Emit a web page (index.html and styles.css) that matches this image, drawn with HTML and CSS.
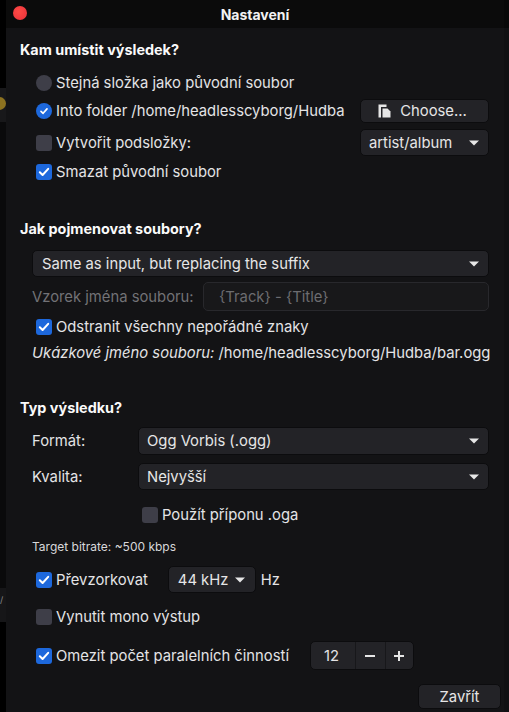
FILE: index.html
```html
<!DOCTYPE html>
<html lang="cs">
<head>
<meta charset="utf-8">
<title>Nastavení</title>
<link rel="stylesheet" href="styles.css">
</head>
<body>
<div class="screen">
  <div class="strip-left">
    <div class="sl-a"></div>
    <div class="sl-band"><span class="sl-dot"></span></div>
    <div class="sl-b"></div>
    <div class="sl-band2"><span class="sl-slash">/</span></div>
  </div>
  <div class="window">
    <div class="titlebar">
      <span class="close-dot"></span>
      <span class="title">Nastavení</span>
    </div>
    <div class="content">
      <div class="heading mt12">Kam umístit výsledek?</div>

      <div class="row h28 mt9 ind-check">
        <span class="radio"></span>
        <span class="label">Stejná složka jako původní soubor</span>
      </div>
      <div class="row h28 ind-check">
        <span class="radio on"><svg width="16" height="16" viewBox="0 0 16 16"><path d="M5 8.3 L7.1 10.3 L11 5.9" fill="none" stroke="#fff" stroke-width="1.7" stroke-linecap="round" stroke-linejoin="round"/></svg></span>
        <span class="label">Into folder /home/headlesscyborg/Hudba</span>
        <span class="spacer"></span>
        <button class="btn choose">
          <svg class="ico" width="13" height="14" viewBox="0 0 13 14"><path d="M0.5 0.5 H8.5 V3 H3 V13.5 H0.5 Z" fill="#e6e6e6"/><path d="M4.5 4.5 H9.5 L12.5 7.5 V13.5 H4.5 Z" fill="#e6e6e6"/></svg>
          <span>Choose...</span>
        </button>
      </div>
      <div class="row h27 mt4 ind-check">
        <span class="check"></span>
        <span class="label">Vytvořit podsložky:</span>
        <span class="spacer"></span>
        <div class="dropdown dd-small">
          <span>artist/album</span>
          <svg class="arrow" width="10" height="6" viewBox="0 0 10 6"><path d="M0 0.5 H10 L5 5.5 Z" fill="#e6e6e6"/></svg>
        </div>
      </div>
      <div class="row h28 mt2 ind-check">
        <span class="check on"><svg width="16" height="16" viewBox="0 0 16 16"><path d="M3.8 8.2 L6.6 11 L12.2 4.8" fill="none" stroke="#fff" stroke-width="2" stroke-linecap="round" stroke-linejoin="round"/></svg></span>
        <span class="label">Smazat původní soubor</span>
      </div>

      <div class="heading mt33">Jak pojmenovat soubory?</div>

      <div class="dropdown dd-full mt11 ind-wid">
        <span>Same as input, but replacing the suffix</span>
        <svg class="arrow" width="10" height="6" viewBox="0 0 10 6"><path d="M0 0.5 H10 L5 5.5 Z" fill="#e6e6e6"/></svg>
      </div>
      <div class="row h29 mt5 ind-wid">
        <span class="label dim">Vzorek jména souboru:</span>
        <div class="entry"><span>{Track} - {Title}</span></div>
      </div>
      <div class="row h26 mt3 ind-check">
        <span class="check on"><svg width="16" height="16" viewBox="0 0 16 16"><path d="M3.8 8.2 L6.6 11 L12.2 4.8" fill="none" stroke="#fff" stroke-width="2" stroke-linecap="round" stroke-linejoin="round"/></svg></span>
        <span class="label">Odstranit všechny nepořádné znaky</span>
      </div>
      <div class="row h20 mt3 ind-wid">
        <span class="label"><em>Ukázkové jméno souboru:</em> /home/headlesscyborg/Hudba/bar.ogg</span>
      </div>

      <div class="heading mt35">Typ výsledku?</div>

      <div class="row h28 mt9 ind-wid">
        <span class="label form-label">Formát:</span>
        <div class="dropdown dd-form">
          <span>Ogg Vorbis (.ogg)</span>
          <svg class="arrow" width="10" height="6" viewBox="0 0 10 6"><path d="M0 0.5 H10 L5 5.5 Z" fill="#e6e6e6"/></svg>
        </div>
      </div>
      <div class="row h27 mt8 ind-wid">
        <span class="label form-label">Kvalita:</span>
        <div class="dropdown dd-form">
          <span>Nejvyšší</span>
          <svg class="arrow" width="10" height="6" viewBox="0 0 10 6"><path d="M0 0.5 H10 L5 5.5 Z" fill="#e6e6e6"/></svg>
        </div>
      </div>
      <div class="row h24 mt13 ind-oga">
        <span class="check"></span>
        <span class="label">Použít příponu .oga</span>
      </div>
      <div class="row h14 mt12 ind-wid">
        <span class="small">Target bitrate: ~500 kbps</span>
      </div>
      <div class="row h27 mt13 ind-check">
        <span class="check on"><svg width="16" height="16" viewBox="0 0 16 16"><path d="M3.8 8.2 L6.6 11 L12.2 4.8" fill="none" stroke="#fff" stroke-width="2" stroke-linecap="round" stroke-linejoin="round"/></svg></span>
        <span class="label resample">Převzorkovat</span>
        <div class="dropdown dd-rate">
          <span>44 kHz</span>
          <svg class="arrow" width="10" height="6" viewBox="0 0 10 6"><path d="M0 0.5 H10 L5 5.5 Z" fill="#e6e6e6"/></svg>
        </div>
        <span class="label hz">Hz</span>
      </div>
      <div class="row h24 mt12 ind-check">
        <span class="check"></span>
        <span class="label">Vynutit mono výstup</span>
      </div>
      <div class="row h29 mt12 ind-check">
        <span class="check on"><svg width="16" height="16" viewBox="0 0 16 16"><path d="M3.8 8.2 L6.6 11 L12.2 4.8" fill="none" stroke="#fff" stroke-width="2" stroke-linecap="round" stroke-linejoin="round"/></svg></span>
        <span class="label parallel">Omezit počet paralelních činností</span>
        <div class="spin">
          <span class="spin-val">12</span>
          <span class="spin-btn"><svg width="12" height="12" viewBox="0 0 12 12"><path d="M1 6 H11" stroke="#e6e6e6" stroke-width="2"/></svg></span>
          <span class="spin-btn"><svg width="12" height="12" viewBox="0 0 12 12"><path d="M1 6 H11 M6 1 V11" stroke="#e6e6e6" stroke-width="2"/></svg></span>
        </div>
      </div>
      <div class="actions mt14">
        <button class="btn close-btn">Zavřít</button>
      </div>
    </div>
  </div>
  <div class="strip-right">
    <div class="sr-top"></div>
    <div class="sr-body"></div>
  </div>
</div>
</body>
</html>
```
FILE: styles.css
```css
* { box-sizing: border-box; }
html, body { margin: 0; padding: 0; background: #000; }
body {
  font-family: Inter, "Noto Sans", "DejaVu Sans", sans-serif;
  font-size: 14.8px;
  color: #e4e4e6;
}
.screen { display: flex; width: 509px; height: 712px; overflow: hidden; }

.strip-left { width: 6px; display: flex; flex-direction: column; background: #000; }
.sl-a { height: 88px; }
.sl-band { height: 34px; background: #18181a; position: relative; overflow: hidden; }
.sl-dot { position: absolute; left: -7px; top: 9px; width: 13px; height: 13px; border-radius: 50%; background: #8c7220; }
.sl-b { height: 466px; background: #0a0a0b; }
.sl-band2 { height: 34px; background: #161618; overflow: hidden; }
.sl-slash { display: block; margin-top: 6px; margin-left: 0; font-size: 9px; color: #8a8a8a; }

.strip-right { width: 5px; display: flex; flex-direction: column; }
.sr-top { height: 28px; background: #080808; }
.sr-body { flex: 1; background: #101012; }

.window { width: 498px; height: 712px; display: flex; flex-direction: column; background: #131315; }
.titlebar { height: 28px; flex: none; background: #0b0b0b; display: flex; align-items: center; justify-content: center; position: relative; }
.close-dot { position: absolute; left: 7px; top: 6px; width: 14px; height: 14px; border-radius: 50%; background: radial-gradient(circle at 40% 40%, #ff4a45, #e8303a); }
.title { font-weight: 700; font-size: 14px; color: #f2f2f2; }

.content { display: flex; flex-direction: column; padding: 0 15px 0 14px; }
.heading { height: 20px; line-height: 20px; font-weight: 700; font-size: 14.4px; color: #fafafa; }

.row { display: flex; align-items: center; }
.h14 { height: 14px; } .h20 { height: 20px; } .h24 { height: 24px; } .h26 { height: 26px; }
.h27 { height: 27px; } .h28 { height: 28px; } .h29 { height: 29px; }
.mt2 { margin-top: 2px; } .mt3 { margin-top: 3px; } .mt4 { margin-top: 4px; } .mt5 { margin-top: 5px; }
.mt8 { margin-top: 8px; } .mt9 { margin-top: 9px; } .mt11 { margin-top: 11px; } .mt12 { margin-top: 12px; }
.mt13 { margin-top: 13px; } .mt14 { margin-top: 14px; } .mt33 { margin-top: 33px; } .mt35 { margin-top: 35px; }

.ind-check { padding-left: 16px; }
.ind-wid { margin-left: 12px; }
.ind-oga { padding-left: 122px; }
.spacer { flex: 1; }

.label { white-space: nowrap; }
.label.dim { color: #727276; }
.label em { font-style: italic; }
.check + .label, .radio + .label { margin-left: 4px; }

.radio { width: 16px; height: 16px; border-radius: 50%; background: #3e3e48; flex: none; display: flex; }
.radio.on { background: #1d68dc; }
.check { width: 16px; height: 16px; border-radius: 3px; background: #3e3e48; flex: none; display: flex; }
.check.on { background: #1d68dc; }

.btn {
  font-family: inherit; font-size: 14.8px; color: #e6e6e6;
  background: #232327; border: 1px solid #0c0c0e; border-radius: 5px;
  display: flex; align-items: center; justify-content: center; padding: 0; margin: 0;
}
.choose { width: 129px; height: 24px; gap: 9px; padding-right: 4px; }

.dropdown {
  display: flex; align-items: center; justify-content: space-between;
  background: #232327; border: 1px solid #0c0c0e; border-radius: 5px;
  color: #e6e6e6; white-space: nowrap;
}
.dropdown .arrow { flex: none; }
.dd-small { width: 129px; height: 27px; padding: 0 9px 0 8px; }
.dd-full { height: 27px; padding: 0 9px 0 9px; }
.dd-form { width: 351px; height: 100%; margin-left: auto; padding: 0 9px 0 8px; }
.form-label { width: 106px; }
.dd-rate { width: 88px; height: 27px; padding: 0 10px 0 9px; margin-left: 20px; }
.hz { margin-left: 5px; }

.entry {
  margin-left: auto; width: 286px; height: 29px;
  background: #18181a; border: 1px solid #28282c; border-radius: 5px;
  display: flex; align-items: center; padding-left: 15px; color: #6c6c70;
}

.small { font-size: 12px; color: #d8d8da; }

.spin {
  margin-left: 21px; width: 104px; height: 29px; display: flex;
  background: #232327; border: 1px solid #0c0c0e; border-radius: 5px;
}
.spin-val { width: 46px; display: flex; align-items: center; justify-content: center; border-right: 1px solid #17171a; padding-right: 3px; }
.spin-btn { width: 29px; display: flex; align-items: center; justify-content: center; }
.spin-btn + .spin-btn { border-left: 1px solid #17171a; }

.actions { display: flex; justify-content: flex-end; margin-right: -12px; }
.close-btn { width: 83px; height: 25px; }
```
